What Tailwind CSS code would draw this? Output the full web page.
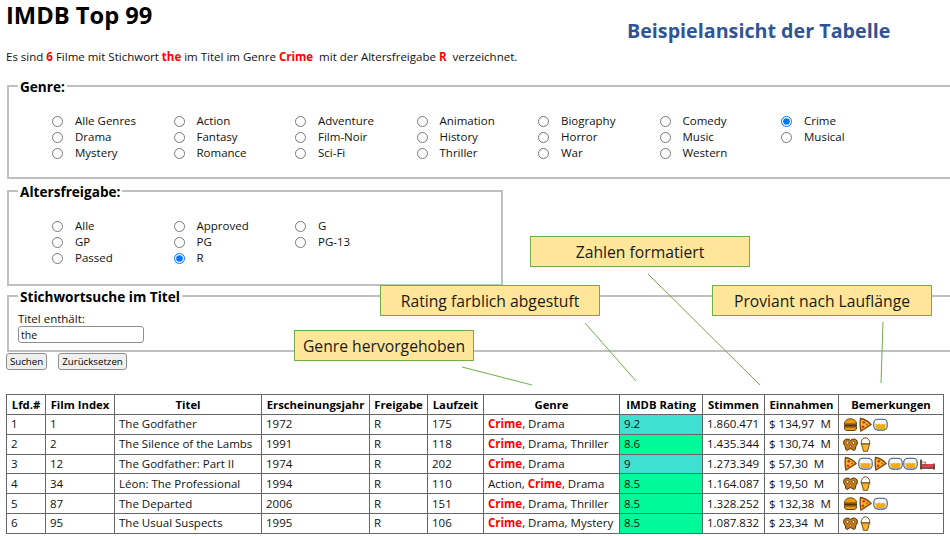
<!DOCTYPE html>
<html lang="de">
  <head>
    <meta charset="UTF-8" />
    <title>IMDB Top 99</title>
    <script src="https://cdn.jsdelivr.net/npm/@tailwindcss/browser@4"></script>
  </head>
  <body class="relative h-[536px] w-[950px] overflow-hidden bg-white font-['Open_Sans','Noto_Sans',sans-serif] text-[11.500px] leading-4 text-[#111]">
    <!-- icon sprites -->
    <svg class="hidden">
      <symbol id="burger" viewBox="0 0 15 15">
        <path d="M1.500 7C1.500 3.500 4.500 1.800 7.500 1.800S13.500 3.500 13.500 7z" fill="#eb9a12" stroke="#6e4306" />
        <rect x="1" y="7.300" width="13" height="2.400" fill="#5a3208" />
        <path d="M1.500 10h12v1c0 1.500-1 2.500-2.500 2.500H4c-1.500 0-2.500-1-2.500-2.500z" fill="#eb9a12" stroke="#6e4306" />
      </symbol>
      <symbol id="pizza" viewBox="0 0 15 15">
        <path d="M2.500 1.500C2 5 2 10 3 14L13 7.500C10 4 6.500 2 2.500 1.500z" fill="#f9b82c" stroke="#7a4406" stroke-width="1.300" />
        <circle cx="5.800" cy="5.300" r="1.400" fill="#d8341c" />
        <circle cx="5" cy="9.800" r="1.400" fill="#d8341c" />
        <circle cx="9" cy="7.500" r=".9" fill="#d8341c" />
      </symbol>
      <symbol id="beer" viewBox="0 0 15 15">
        <rect x=".8" y="2.300" width="13.400" height="10.800" rx="4" fill="#f6f8fa" stroke="#3d5c74" stroke-width="1.100" />
        <path d="M2.500 6.500c1.500 1.500 2.500 1 3.500 0 1 1.300 2.500 1.300 3.500.3 1 .7 2 .7 3 .2v3.500c0 1-.8 1.500-2 1.500h-6c-1.200 0-2-.5-2-1.500z" fill="#f3ab17" />
      </symbol>
      <symbol id="pretzel" viewBox="0 0 15 15">
        <path d="M7.500 3.500C6 1.500 .8 1.200 .6 5.500.5 8 2.500 9 2.500 11c0 2 1.500 3 2.500 2 .8-.8 1.500-1.200 2.500-1.200s1.700.4 2.500 1.200c1 1 2.500 0 2.500-2 0-2 2-3 1.900-5.500C14.200 1.200 9 1.500 7.500 3.500z" fill="#c97a10" stroke="#4f2e05" />
        <circle cx="4.500" cy="5.800" r="1.300" fill="#fff" stroke="#4f2e05" stroke-width=".6" />
        <circle cx="10.500" cy="5.800" r="1.300" fill="#fff" stroke="#4f2e05" stroke-width=".6" />
        <circle cx="7.500" cy="9.200" r="1" fill="#fff" stroke="#4f2e05" stroke-width=".6" />
      </symbol>
      <symbol id="icecream" viewBox="0 0 15 15">
        <path d="M3.300 7C2.800 3.200 5.500 .8 7.500 .8S12.200 3.200 11.700 7z" fill="#fffdf2" stroke="#4f3d18" />
        <path d="M3.500 7h8L9.500 14.300h-4z" fill="#f4b437" stroke="#7a4f0c" />
      </symbol>
      <symbol id="bed" viewBox="0 0 15 15">
        <path d="M1 3.500V13.500M14 7.500V13.500M1 12h13" stroke="#4d2418" stroke-width="1.600" fill="none" />
        <rect x="1.800" y="8" width="11.500" height="3.200" fill="#e2404f" />
        <rect x="1.800" y="6" width="4" height="2.200" fill="#f3eee6" stroke="#4d2418" stroke-width=".5" />
      </symbol>
    </svg>

    <header class="h-[49px] pl-[6px]">
      <h1 class="text-[23.700px] leading-[30px] font-bold text-black">IMDB Top 99</h1>
    </header>
    <p class="pl-[6px] leading-4 whitespace-pre">Es sind <b class="text-[#f00]">6</b> Filme mit Stichwort <b class="text-[#f00]">the</b> im Titel im Genre <b class="text-[#f00]">Crime</b>  mit der Altersfreigabe <b class="text-[#f00]">R</b>  verzeichnet.</p>

    <form class="mt-[10px] pl-[7px]">
      <fieldset class="h-[104px] w-[950px] border-2 border-[#c0c0c0] px-[9px]">
        <legend class="px-[2px] pt-[2px] text-[13.600px] leading-[19px] font-bold text-black">Genre:</legend>
        <div class="mt-[17px] ml-[34px] grid grid-cols-[repeat(7,121.500px)] auto-rows-[16px]">
          <label class="flex items-center"><input type="radio" name="genre" class="mr-[12px] size-[11px] accent-[#0075ff]" />Alle Genres</label>
          <label class="flex items-center"><input type="radio" name="genre" class="mr-[12px] size-[11px] accent-[#0075ff]" />Action</label>
          <label class="flex items-center"><input type="radio" name="genre" class="mr-[12px] size-[11px] accent-[#0075ff]" />Adventure</label>
          <label class="flex items-center"><input type="radio" name="genre" class="mr-[12px] size-[11px] accent-[#0075ff]" />Animation</label>
          <label class="flex items-center"><input type="radio" name="genre" class="mr-[12px] size-[11px] accent-[#0075ff]" />Biography</label>
          <label class="flex items-center"><input type="radio" name="genre" class="mr-[12px] size-[11px] accent-[#0075ff]" />Comedy</label>
          <label class="flex items-center"><input type="radio" name="genre" checked class="mr-[12px] size-[11px] accent-[#0075ff]" />Crime</label>
          <label class="flex items-center"><input type="radio" name="genre" class="mr-[12px] size-[11px] accent-[#0075ff]" />Drama</label>
          <label class="flex items-center"><input type="radio" name="genre" class="mr-[12px] size-[11px] accent-[#0075ff]" />Fantasy</label>
          <label class="flex items-center"><input type="radio" name="genre" class="mr-[12px] size-[11px] accent-[#0075ff]" />Film-Noir</label>
          <label class="flex items-center"><input type="radio" name="genre" class="mr-[12px] size-[11px] accent-[#0075ff]" />History</label>
          <label class="flex items-center"><input type="radio" name="genre" class="mr-[12px] size-[11px] accent-[#0075ff]" />Horror</label>
          <label class="flex items-center"><input type="radio" name="genre" class="mr-[12px] size-[11px] accent-[#0075ff]" />Music</label>
          <label class="flex items-center"><input type="radio" name="genre" class="mr-[12px] size-[11px] accent-[#0075ff]" />Musical</label>
          <label class="flex items-center"><input type="radio" name="genre" class="mr-[12px] size-[11px] accent-[#0075ff]" />Mystery</label>
          <label class="flex items-center"><input type="radio" name="genre" class="mr-[12px] size-[11px] accent-[#0075ff]" />Romance</label>
          <label class="flex items-center"><input type="radio" name="genre" class="mr-[12px] size-[11px] accent-[#0075ff]" />Sci-Fi</label>
          <label class="flex items-center"><input type="radio" name="genre" class="mr-[12px] size-[11px] accent-[#0075ff]" />Thriller</label>
          <label class="flex items-center"><input type="radio" name="genre" class="mr-[12px] size-[11px] accent-[#0075ff]" />War</label>
          <label class="flex items-center"><input type="radio" name="genre" class="mr-[12px] size-[11px] accent-[#0075ff]" />Western</label>
        </div>
      </fieldset>

      <fieldset class="mt-[1px] h-[106px] w-[496px] border-2 border-[#c0c0c0] px-[9px]">
        <legend class="px-[2px] pt-[2px] text-[13.600px] leading-[19px] font-bold text-black">Altersfreigabe:</legend>
        <div class="mt-[17px] ml-[34px] grid grid-cols-[repeat(3,121.500px)] auto-rows-[16px]">
          <label class="flex items-center"><input type="radio" name="rating" class="mr-[12px] size-[11px] accent-[#0075ff]" />Alle</label>
          <label class="flex items-center"><input type="radio" name="rating" class="mr-[12px] size-[11px] accent-[#0075ff]" />Approved</label>
          <label class="flex items-center"><input type="radio" name="rating" class="mr-[12px] size-[11px] accent-[#0075ff]" />G</label>
          <label class="flex items-center"><input type="radio" name="rating" class="mr-[12px] size-[11px] accent-[#0075ff]" />GP</label>
          <label class="flex items-center"><input type="radio" name="rating" class="mr-[12px] size-[11px] accent-[#0075ff]" />PG</label>
          <label class="flex items-center"><input type="radio" name="rating" class="mr-[12px] size-[11px] accent-[#0075ff]" />PG-13</label>
          <label class="flex items-center"><input type="radio" name="rating" class="mr-[12px] size-[11px] accent-[#0075ff]" />Passed</label>
          <label class="flex items-center"><input type="radio" name="rating" checked class="mr-[12px] size-[11px] accent-[#0075ff]" />R</label>
        </div>
      </fieldset>

      <fieldset class="-mt-[1px] h-[67px] w-[950px] border-2 border-[#c0c0c0] px-[9px]">
        <legend class="px-[2px] pt-[2px] text-[13.600px] leading-[19px] font-bold text-black">Stichwortsuche im Titel</legend>
        <label class="mt-[5px] block leading-[16px]">Titel enthält:</label>
        <input type="text" value="the" class="-mt-[1px] block h-[17px] w-[126px] rounded-[3px] border border-[#8f8f8f] px-[2px] text-[10.500px]" />
      </fieldset>

      <div class="-ml-[1px] mt-[1px] flex gap-[11px]">
        <button type="button" class="h-[17px] w-[41px] rounded-[3px] border border-[#8f8f8f] bg-[#efefef] text-[9.700px] leading-[14px] text-black">Suchen</button>
        <button type="button" class="h-[17px] w-[69px] rounded-[3px] border border-[#8f8f8f] bg-[#efefef] text-[9.700px] leading-[14px] text-black">Zurücksetzen</button>
      </div>
    </form>

    <table class="mt-[24px] ml-[6px] w-[937px] table-fixed border-collapse [&_td]:h-[19.800px] [&_td]:border [&_td]:border-[#666] [&_td]:px-[4px] [&_td]:py-0 [&_td]:whitespace-nowrap [&_th]:h-[20px] [&_th]:border [&_th]:border-[#666] [&_th]:px-0 [&_th]:py-0 [&_th]:text-[11.300px] [&_th]:text-black">
      <colgroup>
        <col class="w-[39px]" /><col class="w-[69px]" /><col class="w-[147px]" /><col class="w-[108px]" /><col class="w-[58px]" /><col class="w-[56px]" /><col class="w-[136px]" /><col class="w-[83px]" /><col class="w-[62px]" /><col class="w-[74px]" /><col class="w-[105px]" />
      </colgroup>
      <thead>
        <tr><th>Lfd.#</th><th>Film Index</th><th>Titel</th><th>Erscheinungsjahr</th><th>Freigabe</th><th>Laufzeit</th><th>Genre</th><th>IMDB Rating</th><th>Stimmen</th><th>Einnahmen</th><th>Bemerkungen</th></tr>
      </thead>
      <tbody>
        <tr>
          <td>1</td><td>1</td><td>The Godfather</td><td>1972</td><td>R</td><td>175</td>
          <td><b class="text-[#f00]">Crime</b>, Drama</td><td class="bg-[#40e0d0]">9.2</td><td>1.860.471</td><td>$ 134,97&nbsp; M</td>
          <td><div class="flex [&_svg]:size-[15px] [&_svg]:shrink-0"><svg><use href="#burger" /></svg><svg><use href="#pizza" /></svg><svg><use href="#beer" /></svg></div></td>
        </tr>
        <tr>
          <td>2</td><td>2</td><td>The Silence of the Lambs</td><td>1991</td><td>R</td><td>118</td>
          <td><b class="text-[#f00]">Crime</b>, Drama, Thriller</td><td class="bg-[#00fa9a]">8.6</td><td>1.435.344</td><td>$ 130,74&nbsp; M</td>
          <td><div class="flex [&_svg]:size-[15px] [&_svg]:shrink-0"><svg><use href="#pretzel" /></svg><svg><use href="#icecream" /></svg></div></td>
        </tr>
        <tr>
          <td>3</td><td>12</td><td>The Godfather: Part II</td><td>1974</td><td>R</td><td>202</td>
          <td><b class="text-[#f00]">Crime</b>, Drama</td><td class="bg-[#40e0d0]">9</td><td>1.273.349</td><td>$ 57,30&nbsp; M</td>
          <td><div class="flex [&_svg]:size-[15px] [&_svg]:shrink-0"><svg><use href="#pizza" /></svg><svg><use href="#beer" /></svg><svg><use href="#pizza" /></svg><svg><use href="#beer" /></svg><svg><use href="#beer" /></svg><svg class="ml-[2px]"><use href="#bed" /></svg></div></td>
        </tr>
        <tr>
          <td>4</td><td>34</td><td>Léon: The Professional</td><td>1994</td><td>R</td><td>110</td>
          <td>Action, <b class="text-[#f00]">Crime</b>, Drama</td><td class="bg-[#00fa9a]">8.5</td><td>1.164.087</td><td>$ 19,50&nbsp; M</td>
          <td><div class="flex [&_svg]:size-[15px] [&_svg]:shrink-0"><svg><use href="#pretzel" /></svg><svg><use href="#icecream" /></svg></div></td>
        </tr>
        <tr>
          <td>5</td><td>87</td><td>The Departed</td><td>2006</td><td>R</td><td>151</td>
          <td><b class="text-[#f00]">Crime</b>, Drama, Thriller</td><td class="bg-[#00fa9a]">8.5</td><td>1.328.252</td><td>$ 132,38&nbsp; M</td>
          <td><div class="flex [&_svg]:size-[15px] [&_svg]:shrink-0"><svg><use href="#burger" /></svg><svg><use href="#pizza" /></svg><svg><use href="#beer" /></svg></div></td>
        </tr>
        <tr>
          <td>6</td><td>95</td><td>The Usual Suspects</td><td>1995</td><td>R</td><td>106</td>
          <td><b class="text-[#f00]">Crime</b>, Drama, Mystery</td><td class="bg-[#00fa9a]">8.5</td><td>1.087.832</td><td>$ 23,34&nbsp; M</td>
          <td><div class="flex [&_svg]:size-[15px] [&_svg]:shrink-0"><svg><use href="#pretzel" /></svg><svg><use href="#icecream" /></svg></div></td>
        </tr>
      </tbody>
    </table>

    <!-- annotations lying over the page -->
    <div class="absolute top-[17px] left-[627px] text-[19.700px] leading-[28px] font-bold whitespace-nowrap text-[#2f5597]">Beispielansicht der Tabelle</div>
    <svg class="absolute inset-0 size-full pointer-events-none" viewBox="0 0 950 536">
      <g stroke="#70ad47" fill="none">
        <line x1="462" y1="367" x2="532" y2="385" />
        <line x1="585" y1="323" x2="636" y2="381" />
        <line x1="648" y1="274" x2="760" y2="385" />
        <line x1="883" y1="322" x2="881" y2="383" />
      </g>
    </svg>
    <div class="absolute top-[236px] left-[530px] flex h-[31px] w-[220px] items-center justify-center border border-[#70ad47] bg-[#ffe699] text-[15.700px] text-[#1a1a1a]">Zahlen formatiert</div>
    <div class="absolute top-[285px] left-[380px] flex h-[31px] w-[220px] items-center justify-center border border-[#70ad47] bg-[#ffe699] text-[15.700px] text-[#1a1a1a]">Rating farblich abgestuft</div>
    <div class="absolute top-[285px] left-[712px] flex h-[31px] w-[220px] items-center justify-center border border-[#70ad47] bg-[#ffe699] text-[15.700px] text-[#1a1a1a]">Proviant nach Lauflänge</div>
    <div class="absolute top-[330px] left-[294px] flex h-[31px] w-[180px] items-center justify-center border border-[#70ad47] bg-[#ffe699] text-[15.700px] text-[#1a1a1a]">Genre hervorgehoben</div>
  </body>
</html>
